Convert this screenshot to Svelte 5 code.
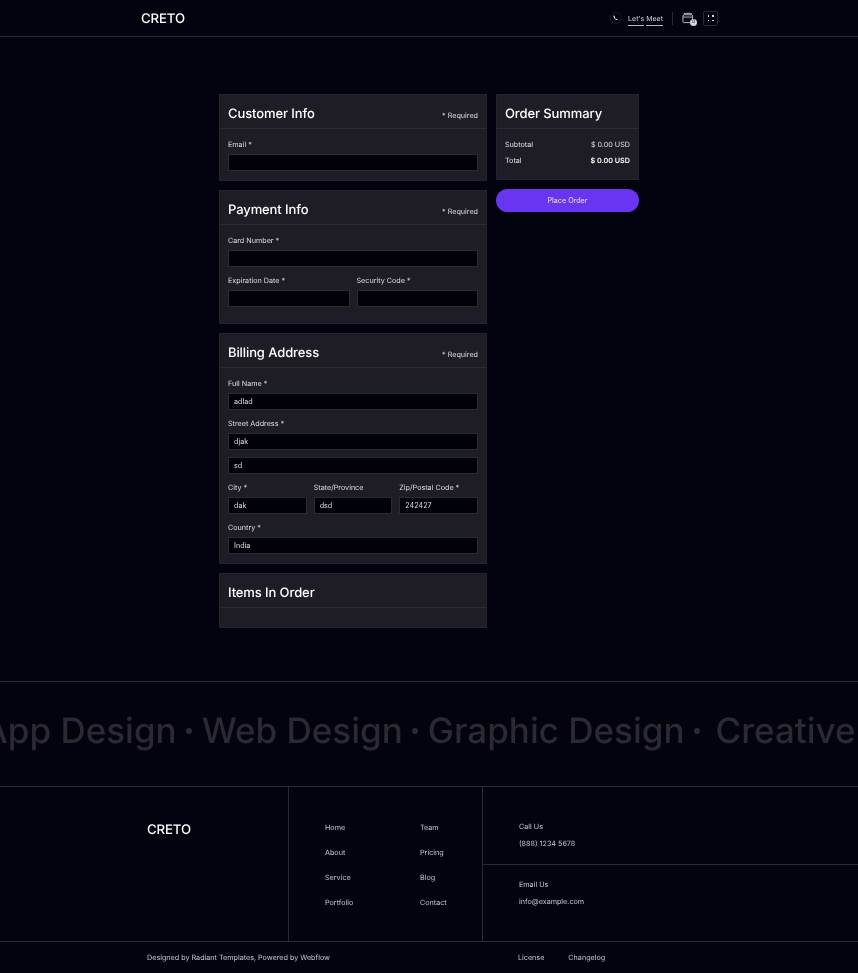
<script>
	const marquee = ['App Design', 'Web Design', 'Graphic Design', 'Creative'];
	const navA = ['Home', 'About', 'Service', 'Portfolio'];
	const navB = ['Team', 'Pricing', 'Blog', 'Contact'];
</script>

<div class="page">
<header class="topbar">
	<div class="logo">CRETO</div>
	<div class="actions">
		<span class="phone">
			<svg width="10" height="10" viewBox="0 0 12 12" fill="none">
				<path d="M3.600 2.800c-.6.300-.8 1-.5 1.900.6 1.700 1.700 2.900 3.300 3.700.7.300 1.300.1 1.700-.5l-1.300-1-.7.500c-.7-.4-1.200-1-1.600-1.700l.5-.7z" fill="#fff" />
			</svg>
		</span>
		<span class="meet"><span class="w">Let's</span> <span class="w">Meet</span></span>
		<span class="divider"></span>
		<span class="cart">
			<svg width="12" height="12" viewBox="0 0 13 13" fill="none" stroke="#c8c8cc" stroke-width="1">
				<rect x="1" y="3" width="10.500" height="8.500" rx="1.500" />
				<path d="M2.500 3V1.500h7.500V3M1 5.500h10.500" />
			</svg>
			<span class="badge">0</span>
		</span>
		<span class="menu">
			<span></span><span></span><span></span><span></span>
		</span>
	</div>
</header>

<main class="checkout">
	<div class="left">
		<section class="block">
			<div class="head"><h4>Customer Info</h4><small>* Required</small></div>
			<div class="body">
				<label for="email">Email *</label>
				<input id="email" type="text" />
			</div>
		</section>

		<section class="block">
			<div class="head"><h4>Payment Info</h4><small>* Required</small></div>
			<div class="body pay">
				<label for="card">Card Number *</label>
				<input id="card" type="text" />
				<div class="row two">
					<div>
						<label for="exp">Expiration Date *</label>
						<input id="exp" type="text" />
					</div>
					<div>
						<label for="cvc">Security Code *</label>
						<input id="cvc" type="text" />
					</div>
				</div>
			</div>
		</section>

		<section class="block">
			<div class="head"><h4>Billing Address</h4><small>* Required</small></div>
			<div class="body bill">
				<label for="name">Full Name *</label>
				<input id="name" type="text" value="adlad" />
				<label for="street">Street Address *</label>
				<input id="street" type="text" value="djak" />
				<input class="line2" type="text" value="sd" />
				<div class="row three">
					<div>
						<label for="city">City *</label>
						<input id="city" type="text" value="dak" />
					</div>
					<div>
						<label for="state">State/Province</label>
						<input id="state" type="text" value="dsd" />
					</div>
					<div>
						<label for="zip">Zip/Postal Code *</label>
						<input id="zip" type="text" value="242427" />
					</div>
				</div>
				<label for="country">Country *</label>
				<input id="country" type="text" value="India" />
			</div>
		</section>

		<section class="block">
			<div class="head"><h4>Items In Order</h4></div>
			<div class="empty"></div>
		</section>
	</div>

	<aside class="right">
		<section class="block">
			<div class="head"><h4>Order Summary</h4></div>
			<div class="sum">
				<div class="sumrow"><span>Subtotal</span><span>$ 0.00 USD</span></div>
				<div class="sumrow"><span>Total</span><strong>$ 0.00 USD</strong></div>
			</div>
		</section>
		<button class="place">Place Order</button>
	</aside>
</main>

<div class="marquee">
	<div class="track">
		{#each marquee as item, i}
			<span>{item}</span>
			{#if i < marquee.length - 1}<i></i>{/if}
		{/each}
	</div>
</div>

<footer>
	<div class="cols">
		<div class="brand"><div class="logo">CRETO</div></div>
		<nav>
			<div class="navcol">
				{#each navA as link}<a href="#top">{link}</a>{/each}
			</div>
			<div class="navcol">
				{#each navB as link}<a href="#top">{link}</a>{/each}
			</div>
		</nav>
		<div class="contact">
			<div class="call">
				<p>Call Us</p>
				<p>(888) 1234 5678</p>
			</div>
			<div class="mail">
				<p>Email Us</p>
				<p>info@example.com</p>
			</div>
		</div>
	</div>
	<div class="bottom">
		<div class="credit">Designed by Radiant Templates, Powered by Webflow</div>
		<div class="legal">
			<a href="#top">License</a>
			<a href="#top">Changelog</a>
		</div>
	</div>
</footer>
</div>

<style>
	:global(body) {
		background: #03020f;
		color: #fff;
		font-family: Inter, 'Liberation Sans', sans-serif;
		overflow-x: hidden;
		text-rendering: geometricPrecision;
	}

	/* own layer, so text is antialiased in grey */
	.page {
		will-change: transform;
	}

	.topbar {
		height: 36px;
		border-bottom: 1px solid #2a2933;
		display: flex;
		align-items: center;
		justify-content: space-between;
		padding: 0 140px 0 141px;
	}

	.topbar .logo {
		margin-top: 1px;
	}

	.logo {
		font-size: 13.200px;
		font-weight: 500;
		line-height: 14px;
		letter-spacing: -0.1px;
	}

	.actions {
		display: flex;
		align-items: center;
		font-size: 7px;
		color: #dcdce0;
	}

	.phone {
		width: 12px;
		height: 12px;
		box-sizing: border-box;
		border: 1px solid #1c1b24;
		border-radius: 50%;
		display: flex;
		align-items: center;
		justify-content: center;
		margin-right: 6px;
	}

	.meet {
		display: flex;
		gap: 2px;
		margin-right: 9px;
	}

	.meet .w {
		border-bottom: 1px solid #b8b8bc;
		padding-bottom: 2px;
		margin-top: 3px;
	}

	.divider {
		width: 1px;
		height: 13px;
		background: #2a2933;
		margin-right: 9px;
	}

	.cart {
		position: relative;
		width: 12px;
		height: 12px;
		margin-right: 9px;
	}

	.cart svg {
		display: block;
	}

	.badge {
		position: absolute;
		right: -3px;
		bottom: -2px;
		width: 7px;
		height: 7px;
		border-radius: 50%;
		background: #d8d8e4;
		color: #222;
		font-size: 5px;
		line-height: 7px;
		text-align: center;
	}

	.menu {
		width: 15px;
		height: 15px;
		box-sizing: border-box;
		border: 1px solid #2a2933;
		border-radius: 2px;
		display: grid;
		grid-template-columns: 1.500px 1.500px;
		grid-auto-rows: 1.500px;
		gap: 3px;
		align-content: center;
		justify-content: center;
	}

	.menu span {
		background: #d8d8dc;
	}

	.checkout {
		width: 420px;
		margin: 0 auto;
		padding: 57px 0 53px;
		display: flex;
		gap: 9px;
		align-items: flex-start;
	}

	.left {
		width: 268px;
		display: flex;
		flex-direction: column;
		gap: 9px;
	}

	.right {
		width: 143px;
	}

	.block {
		background: #1e1d25;
		border: 1px solid #24232b;
	}

	.head {
		height: 34px;
		box-sizing: border-box;
		padding: 5px 8px 0;
		border-bottom: 1px solid #2c2b33;
		display: flex;
		align-items: center;
		justify-content: space-between;
	}

	h4 {
		margin: 0;
		font-size: 13px;
		font-weight: 500;
		line-height: 18px;
		letter-spacing: -0.1px;
	}

	small {
		font-size: 7.200px;
		color: #dcdce0;
		padding-top: 3px;
	}

	.body {
		padding: 11px 8px 0;
		height: 51px;
		box-sizing: border-box;
	}

	.pay {
		height: 98px;
	}

	.bill {
		height: 195px;
	}

	.empty {
		height: 19px;
	}

	label {
		display: block;
		font-size: 7.200px;
		line-height: 10px;
		font-weight: 400;
		color: #dedee2;
		margin-bottom: 4px;
	}

	input {
		display: block;
		width: 100%;
		box-sizing: border-box;
		height: 17px;
		background: #020109;
		border: 1px solid #2c2b33;
		color: #dcdce0;
		font-family: Inter, 'Liberation Sans', sans-serif;
		font-size: 7.200px;
		padding: 0 5px;
		margin-bottom: 9px;
		outline: none;
	}

	.line2 {
		margin-top: -2px;
	}

	.row {
		display: grid;
		gap: 7px;
	}

	.two {
		grid-template-columns: 1fr 1fr;
	}

	.three {
		grid-template-columns: repeat(3, 1fr);
	}

	.sum {
		height: 50px;
		box-sizing: border-box;
		padding: 11px 8px 0;
		font-size: 7.200px;
		color: #e0e0e4;
	}

	.sumrow {
		display: flex;
		justify-content: space-between;
		line-height: 10px;
		margin-bottom: 6px;
	}

	strong {
		font-weight: 600;
		color: #fff;
	}

	.place {
		display: block;
		width: 100%;
		height: 23px;
		margin-top: 9px;
		border: none;
		border-radius: 12px;
		background: #6a35f0;
		color: #e8e8ec;
		font-family: Inter, 'Liberation Sans', sans-serif;
		font-size: 7.200px;
		font-weight: 400;
	}

	.marquee {
		height: 104px;
		border-top: 1px solid #2a2933;
		border-bottom: 1px solid #2a2933;
		overflow: hidden;
		display: flex;
		align-items: center;
	}

	.track {
		display: flex;
		align-items: center;
		gap: 9.500px;
		margin-left: -17px;
		margin-bottom: 6px;
		white-space: nowrap;
		font-size: 35px;
		font-weight: 500;
		color: #2b2a30;
	}

	.track span:last-child {
		margin-left: 6px;
	}

	.track i {
		width: 6px;
		height: 6px;
		border-radius: 50%;
		background: #2b2a30;
	}

	.cols {
		display: grid;
		grid-template-columns: 289px 194px 1fr;
		height: 154px;
		border-bottom: 1px solid #2a2933;
	}

	.brand {
		border-right: 1px solid #2a2933;
		padding: 36px 0 0 147px;
	}

	nav {
		border-right: 1px solid #2a2933;
		padding: 36px 0 0 36px;
		display: grid;
		grid-template-columns: 95px 1fr;
		align-content: start;
	}

	.navcol {
		display: flex;
		flex-direction: column;
		gap: 15px;
	}

	a {
		font-size: 7.200px;
		line-height: 10px;
		color: #c8c8cc;
		text-decoration: none;
	}

	.contact p {
		margin: 0 0 7px;
		font-size: 7.200px;
		line-height: 10px;
		color: #c8c8cc;
	}

	.call {
		height: 78px;
		box-sizing: border-box;
		padding: 35px 0 0 36px;
		border-bottom: 1px solid #2a2933;
	}

	.mail {
		padding: 15px 0 0 36px;
	}

	.bottom {
		height: 31px;
		display: grid;
		grid-template-columns: 518px 1fr;
		align-items: center;
		font-size: 7.200px;
		color: #c8c8cc;
	}

	.credit {
		padding-left: 147px;
	}

	.legal {
		display: flex;
		gap: 24px;
	}
</style>
